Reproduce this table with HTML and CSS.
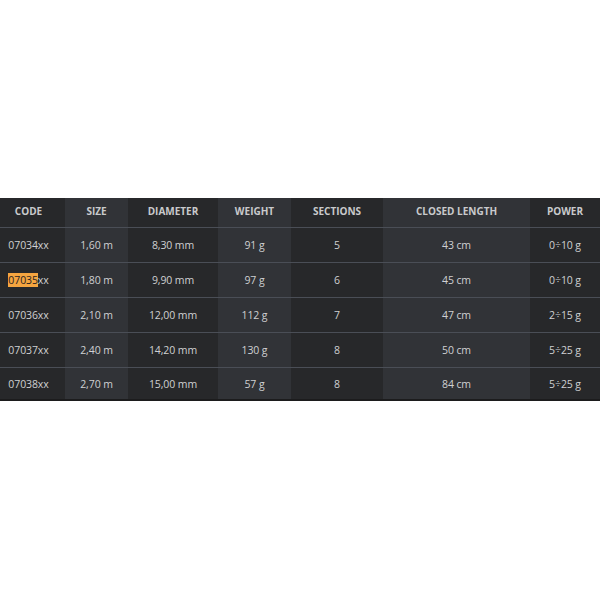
FILE: index.html
```
<!DOCTYPE html>
<html>
<head>
<meta charset="utf-8">
<link rel="stylesheet" href="styles.css">
</head>
<body>
<div class="wrap">
<table class="specs">
  <colgroup>
    <col class="c-code"><col class="c-size alt"><col class="c-dia"><col class="c-wt alt"><col class="c-sec"><col class="c-len alt"><col class="c-pow">
  </colgroup>
  <thead>
    <tr><th class="code">CODE</th><th>SIZE</th><th>DIAMETER</th><th>WEIGHT</th><th>SECTIONS</th><th>CLOSED LENGTH</th><th>POWER</th></tr>
  </thead>
  <tbody>
    <tr><td class="code">07034xx</td><td>1,60 m</td><td>8,30 mm</td><td>91 g</td><td>5</td><td>43 cm</td><td>0÷10 g</td></tr>
    <tr><td class="code"><span class="hl">07035</span>xx</td><td>1,80 m</td><td>9,90 mm</td><td>97 g</td><td>6</td><td>45 cm</td><td>0÷10 g</td></tr>
    <tr><td class="code">07036xx</td><td>2,10 m</td><td>12,00 mm</td><td>112 g</td><td>7</td><td>47 cm</td><td>2÷15 g</td></tr>
    <tr><td class="code">07037xx</td><td>2,40 m</td><td>14,20 mm</td><td>130 g</td><td>8</td><td>50 cm</td><td>5÷25 g</td></tr>
    <tr class="last"><td class="code">07038xx</td><td>2,70 m</td><td>15,00 mm</td><td>57 g</td><td>8</td><td>84 cm</td><td>5÷25 g</td></tr>
  </tbody>
</table>
</div>
</body>
</html>
```
FILE: styles.css
```
html, body {
  margin: 0;
  padding: 0;
  background: #ffffff;
}
.wrap {
  padding-top: 198px;
  width: 600px;
}
.specs {
  width: 600px;
  border-collapse: collapse;
  table-layout: fixed;
  background: #27282a;
  font-family: "Open Sans", "Liberation Sans", sans-serif;
  color: #cfd0d2;
  border-bottom: 2px solid #1c1c1d;
}
.c-code { width: 65px; }
.c-size { width: 63px; }
.c-dia { width: 90px; }
.c-wt { width: 73px; }
.c-sec { width: 92px; }
.c-len { width: 147px; }
.c-pow { width: 70px; }
col.alt { background: #313337; }
th {
  height: 26px;
  padding: 0 0 3px 0;
  font-size: 10px;
  font-weight: 700;
  color: #c9cacc;
  text-align: center;
  border-bottom: 1px solid #4a4e56;
}
td {
  height: 34px;
  padding: 0;
  font-size: 10.5px;
  text-align: center;
  border-bottom: 1px solid #4a4e56;
  letter-spacing: -0.1px;
}
tr.last td { height: 31px; border-bottom: none; }
th.code, td.code { padding-right: 8px; }
.hl {
  background: #f5a540;
  color: #2a2320;
}
```
